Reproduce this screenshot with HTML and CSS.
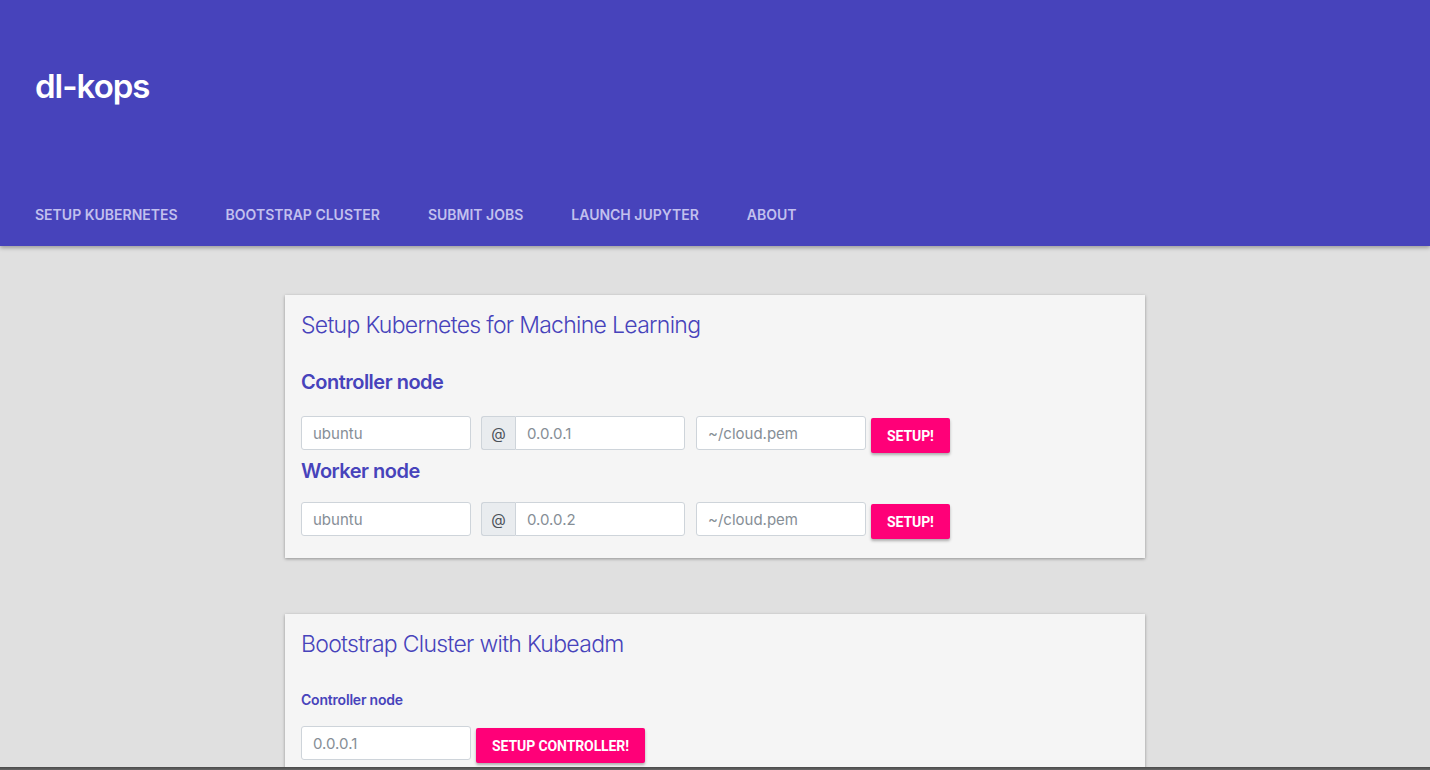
FILE: index.html
```html
<!DOCTYPE html>
<html>
<head>
<meta charset="utf-8">
<link rel="stylesheet" href="styles.css">
</head>
<body>
<header class="appbar">
  <div class="brand">dl-kops</div>
  <nav class="tabs">
    <span class="tab">Setup Kubernetes</span>
    <span class="tab">Bootstrap Cluster</span>
    <span class="tab">Submit Jobs</span>
    <span class="tab">Launch Jupyter</span>
    <span class="tab">About</span>
  </nav>
</header>
<main class="content">
  <section class="card">
    <h2 class="card-title">Setup Kubernetes for Machine Learning</h2>
    <h3 class="node-title">Controller node</h3>
    <div class="row">
      <input class="field" placeholder="ubuntu">
      <div class="group"><span class="addon">@</span><input class="field inner" placeholder="0.0.0.1"></div>
      <input class="field" placeholder="~/cloud.pem">
      <button class="btn">SETUP!</button>
    </div>
    <h3 class="node-title tight">Worker node</h3>
    <div class="row second-row">
      <input class="field" placeholder="ubuntu">
      <div class="group"><span class="addon">@</span><input class="field inner" placeholder="0.0.0.2"></div>
      <input class="field" placeholder="~/cloud.pem">
      <button class="btn">SETUP!</button>
    </div>
  </section>
  <section class="card second">
    <h2 class="card-title">Bootstrap Cluster with Kubeadm</h2>
    <h4 class="small-title">Controller node</h4>
    <div class="row narrow">
      <input class="field" placeholder="0.0.0.1">
      <button class="btn">SETUP CONTROLLER!</button>
    </div>
  </section>
</main>
<div class="window-edge"></div>
</body>
</html>
```
FILE: styles.css
```css
html, body {
  margin: 0;
  padding: 0;
}
body {
  background: #e0e0e0;
  font-family: Inter, Roboto, "Liberation Sans", sans-serif;
  height: 770px;
  overflow: hidden;
}
.appbar {
  background: #4743bb;
  height: 246px;
  display: flex;
  flex-direction: column;
  justify-content: space-between;
  box-shadow: 0 2px 4px rgba(0,0,0,0.3);
  position: relative;
  z-index: 1;
}
.brand {
  color: #fff;
  font-size: 33px;
  font-weight: 600;
  letter-spacing: -1px;
  padding: 66px 0 0 35px;
  line-height: 40px;
}
.tabs {
  display: flex;
  padding-left: 11px;
  height: 64px;
  align-items: center;
}
.tab {
  color: #c2c0ee;
  font-size: 14px;
  font-weight: 600;
  text-transform: uppercase;
  padding: 0 24px;
  letter-spacing: 0;
  line-height: 64px;
  position: relative;
  top: 1px;
}
.content {
  padding-top: 49px;
}
.card {
  width: 860px;
  box-sizing: border-box;
  margin: 0 auto;
  background: #f5f5f5;
  box-shadow: 0 1px 3px rgba(0,0,0,0.35);
  padding: 14px 16px 19px;
}
.card.second {
  margin-top: 56px;
}
.card-title {
  margin: 0;
  color: #4743bb;
  font-size: 23px;
  font-weight: 300;
  line-height: 32px;
  letter-spacing: -0.7px;
}
.node-title {
  margin: 27px 0 0;
  color: #4743bb;
  font-size: 20px;
  font-weight: 600;
  line-height: 28px;
  letter-spacing: -0.5px;
}
.node-title.tight {
  margin-top: 4px;
}
.small-title {
  margin: 30px 0 0;
  color: #4743bb;
  font-size: 14px;
  font-weight: 600;
  line-height: 20px;
  letter-spacing: -0.2px;
}
.row {
  display: flex;
  align-items: flex-start;
  margin-top: 20px;
}
.row.second-row {
  margin-top: 17px;
}
.row.narrow {
  margin-top: 16px;
}
.field {
  width: 170px;
  height: 34px;
  box-sizing: border-box;
  border: 1px solid #ced4da;
  border-radius: 3px;
  background: #fff;
  padding: 0 11px;
  font-family: inherit;
  font-size: 15px;
  color: #495057;
  margin-right: 10px;
  outline: none;
}
.field::placeholder {
  color: #868e96;
}
.row .field:nth-last-child(2) {
  margin-right: 5px;
}
.group {
  display: flex;
  margin-right: 11px;
}
.addon {
  width: 34px;
  height: 34px;
  box-sizing: border-box;
  background: #e9ecef;
  border: 1px solid #ced4da;
  border-right: none;
  border-radius: 3px 0 0 3px;
  display: flex;
  align-items: center;
  justify-content: center;
  color: #495057;
  font-size: 15px;
}
.field.inner {
  margin-right: 0;
  border-radius: 0 3px 3px 0;
}
.btn {
  margin-top: 2px;
  height: 35px;
  border: none;
  border-radius: 2px;
  background: #ff0078;
  color: #fff;
  font-family: Roboto, "Liberation Sans", sans-serif;
  font-size: 14px;
  font-weight: 700;
  padding: 0 16px;
  letter-spacing: -0.1px;
  box-shadow: 0 2px 3px rgba(0,0,0,0.3);
}
.window-edge {
  position: fixed;
  left: 0;
  right: 0;
  bottom: 0;
  height: 3px;
  background: linear-gradient(#4a4a4a, #666);
  z-index: 5;
}
```
